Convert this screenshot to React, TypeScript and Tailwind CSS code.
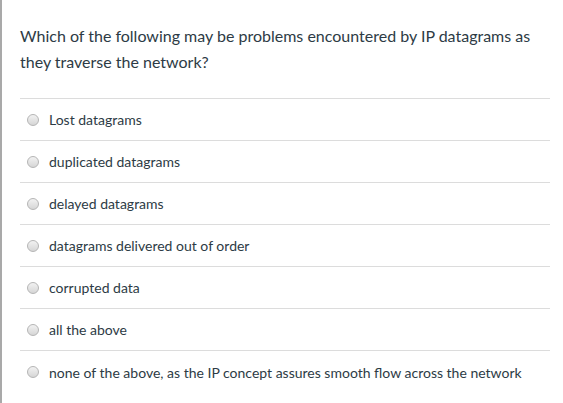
import React from 'react';

const options = [
  'Lost datagrams',
  'duplicated datagrams',
  'delayed datagrams',
  'datagrams delivered out of order',
  'corrupted data',
  'all the above',
  'none of the above, as the IP concept assures smooth flow across the network',
];

function Radio() {
  return (
    <span className="block w-[12px] h-[12px] rounded-full border border-[#b5b5b5] bg-gradient-to-b from-[#f2f2f2] to-[#d6d6d6] shrink-0" />
  );
}

export default function App() {
  return (
    <div
      className="w-[563px] h-[403px] bg-white border-l-2 border-[#a9a9a9] text-[#2d3b45] overflow-hidden"
      style={{ fontFamily: 'Lato, "Open Sans", sans-serif' }}
    >
      <div className="pl-[18px] pr-[13px] pt-[23px]">
        <p className="text-[16px] leading-[26px] pb-[23px] border-b border-[#dcdcdc]">
          Which of the following may be problems encountered by IP datagrams as they traverse the network?
        </p>
        {options.map((opt, i) => (
          <div
            key={opt}
            className={
              'flex items-center gap-[10px] pl-[7px] h-[42px] ' +
              (i < options.length - 1 ? 'border-b border-[#dcdcdc]' : '')
            }
          >
            <Radio />
            <span className="text-[14px]">{opt}</span>
          </div>
        ))}
      </div>
    </div>
  );
}
